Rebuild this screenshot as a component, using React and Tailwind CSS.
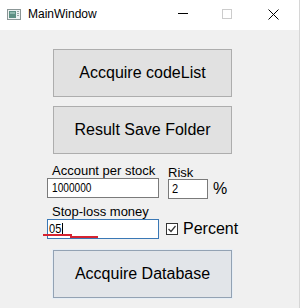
import React from "react";

export default function App() {
  return (
    <div
      className="w-[300px] h-[308px] flex flex-col bg-[#f0f0f0] border-r border-[#d6d6d6] text-black"
      style={{ fontFamily: '"Liberation Sans", Arial, sans-serif' }}
    >
      {/* Title bar */}
      <div className="h-[30px] bg-white flex items-center pb-[2px] pl-[7px]">
        <svg width="14" height="11" viewBox="0 0 14 11" className="shrink-0">
          <rect x="0.5" y="0.5" width="13" height="10" fill="#eef2f2" stroke="#8b9696" />
          <rect x="2" y="2" width="7" height="7" fill="#5e8f83" />
          <rect x="3" y="3" width="5" height="2" fill="#8fb8ad" />
          <rect x="10" y="2" width="2" height="1" fill="#9aa5a5" />
          <rect x="10" y="4" width="2" height="1" fill="#9aa5a5" />
          <rect x="10" y="6" width="2" height="1" fill="#9aa5a5" />
        </svg>
        <span className="ml-[7px] text-[12px] leading-[14px]">MainWindow</span>
        <div className="ml-auto flex items-center pr-[20px]">
          <div className="w-[10px] h-[1px] bg-black mt-[-1px]" />
          <div className="ml-[34px] w-[10px] h-[10px] border border-[#cccccc]" />
          <svg width="11" height="11" viewBox="0 0 11 11" className="ml-[36px]">
            <path d="M0.5 0.5 L10.5 10.5 M10.5 0.5 L0.5 10.5" stroke="#000" strokeWidth="1" />
          </svg>
        </div>
      </div>

      {/* Body */}
      <div className="relative flex-1 flex flex-col">
        <button className="ml-[53px] mt-[19px] w-[179px] h-[48px] border border-[#adadad] bg-[#e1e1e1] text-[16px]">
          Accquire codeList
        </button>
        <button className="ml-[53px] mt-[9px] w-[179px] h-[48px] border border-[#adadad] bg-[#e1e1e1] text-[16px]">
          Result Save Folder
        </button>

        {/* Row 1 */}
        <div className="flex mt-[10px] ml-[47px]">
          <div className="flex flex-col w-[112px]">
            <div className="h-[14px] leading-[14px] text-[13px] pl-[5px] whitespace-nowrap">Account per stock</div>
            <div className="h-[20px] border border-[#7a7a7a] bg-white pl-[4px] flex items-center text-[13px]">
              <span className="inline-block scale-x-[0.78] origin-left">1000000</span>
            </div>
          </div>
          <div className="flex flex-col ml-[9px] pt-[2px]">
            <div className="h-[13px] leading-[13px] text-[13px]">Risk</div>
            <div className="flex items-center">
              <div className="w-[40px] h-[20px] border border-[#7a7a7a] bg-white pl-[3px] flex items-center text-[13px]">
                <span className="inline-block scale-x-[0.85] origin-left">2</span>
              </div>
              <span className="ml-[5px] text-[16px] leading-[16px]">%</span>
            </div>
          </div>
        </div>

        {/* Row 2 */}
        <div className="flex flex-col mt-[6px] ml-[47px]">
          <div className="h-[14px] leading-[14px] text-[13px] pl-[5px] whitespace-nowrap">Stop-loss money</div>
          <div className="flex items-center">
            <div className="w-[112px] h-[20px] border border-[#3a78b5] bg-white pl-[1px] flex items-center text-[13px]">
              <span className="inline-block scale-x-[0.85] origin-left">05</span>
              <span className="ml-[-1px] w-[1px] h-[13px] bg-black" />
            </div>
            <div className="ml-[7px] w-[12px] h-[12px] border border-[#333333] bg-white flex items-center justify-center">
              <svg width="10" height="10" viewBox="0 0 10 10">
                <path d="M1.5 5 L4 7.5 L8.5 2" fill="none" stroke="#333" strokeWidth="1.2" />
              </svg>
            </div>
            <span className="ml-[5px] text-[16px] leading-[18px]">Percent</span>
          </div>
        </div>

        <button className="ml-[53px] mt-[11px] w-[179px] h-[48px] border border-[#93a2b3] bg-[#e2e5e9] text-[16px] outline outline-1 outline-[#e6eef6]">
          Accquire Database
        </button>

        {/* red annotation line */}
        <div className="absolute left-[43px] top-[204px] w-[29px] h-[2px] bg-[#d52431]" />
        <div className="absolute left-[70px] top-[206px] w-[28px] h-[2px] bg-[#d52431]" />
      </div>
    </div>
  );
}
